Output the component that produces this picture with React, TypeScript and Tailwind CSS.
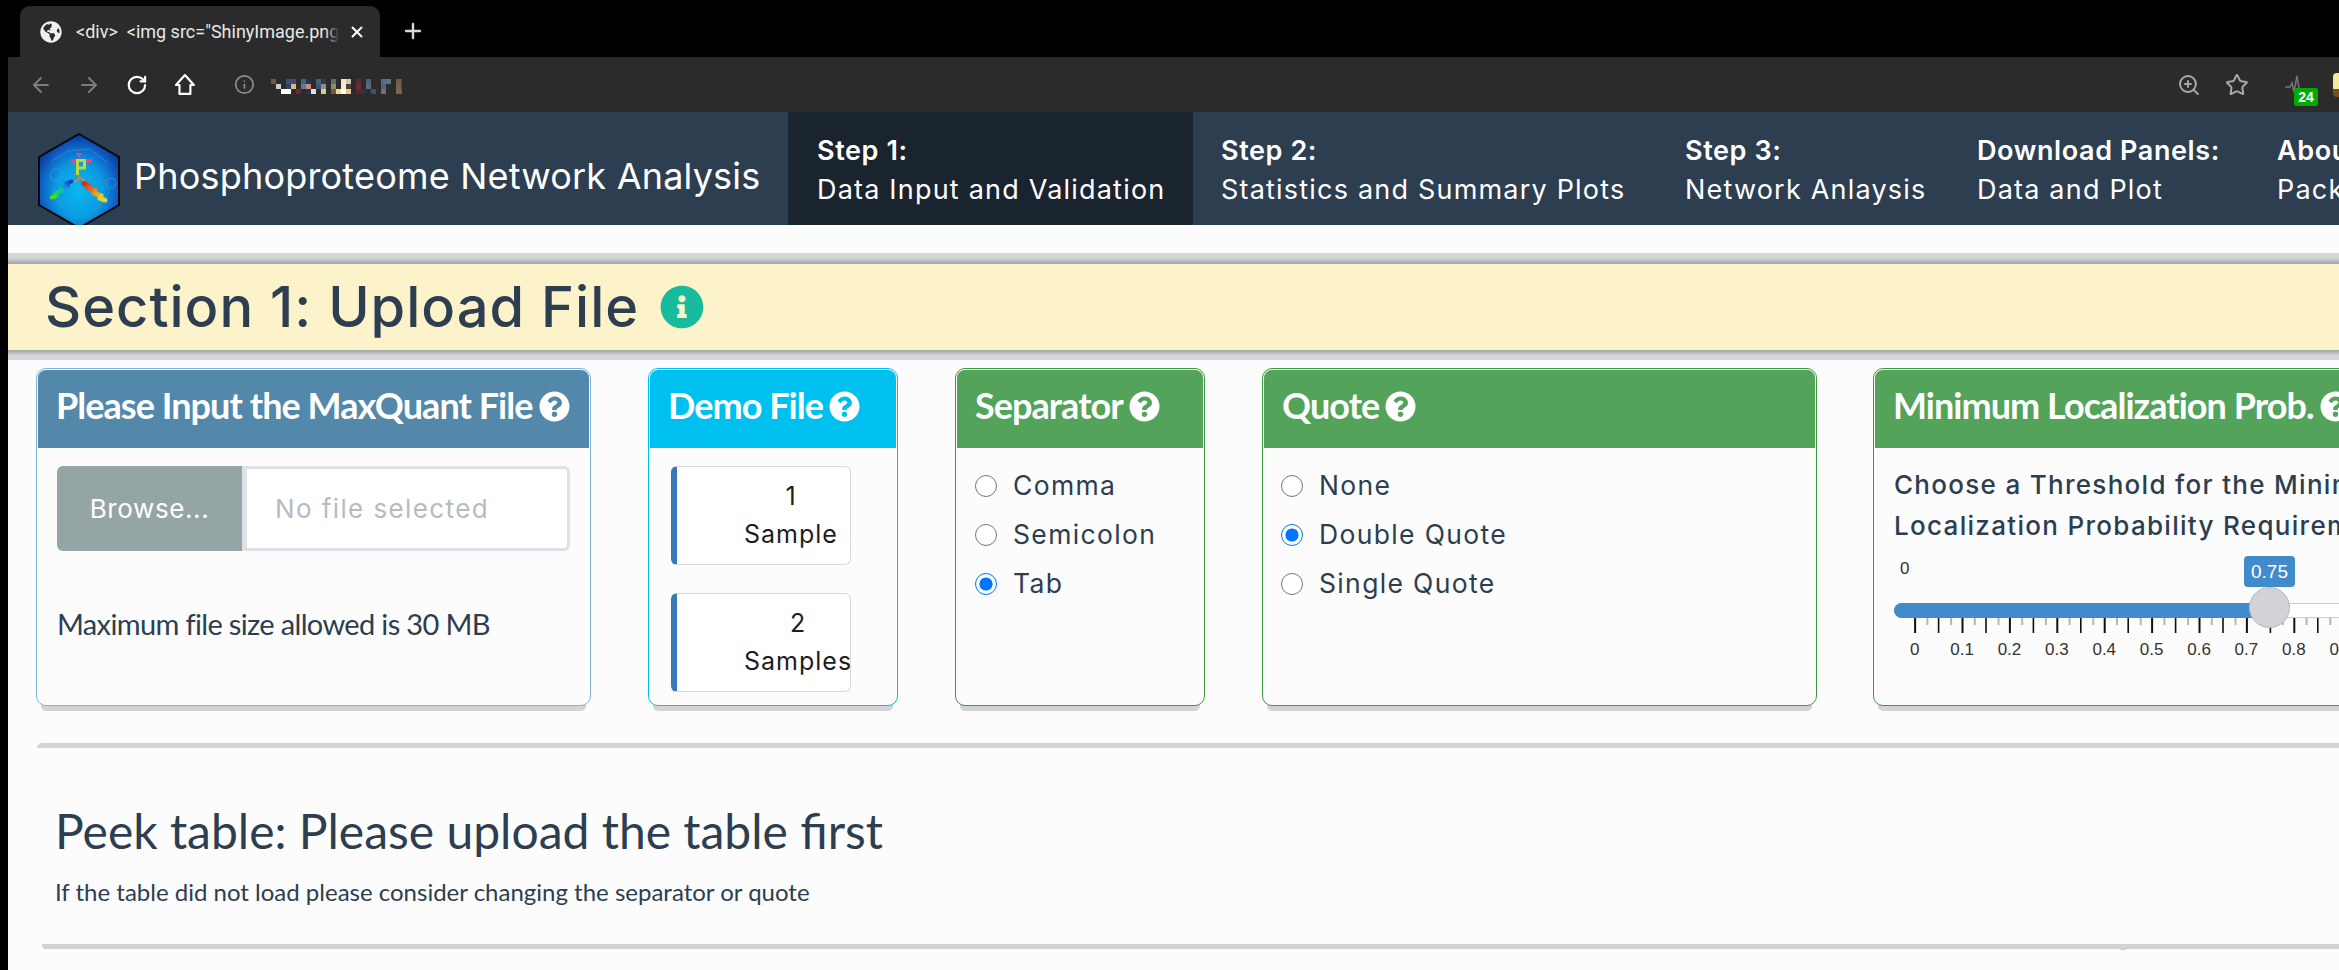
import React from "react";
import { ArrowLeft, ArrowRight, RotateCw, Info, ZoomIn, Star, Plus, X } from "lucide-react";
import { FaGlobeAmericas, FaInfoCircle, FaQuestionCircle } from "react-icons/fa";

const work = "font-['Inter','Noto_Sans',sans-serif]";
const lato = "font-['Lato','Noto_Sans',sans-serif]";

const mosaic: [number, number, string][] = [
  [0,0,"#6b5b4a"],[3,0,"#39506e"],[4,0,"#39506e"],[6,0,"#4a5f78"],[7,0,"#22344e"],[9,0,"#4a5f78"],[10,0,"#2a3c58"],[12,0,"#6a6a6a"],[14,0,"#f2e8c4"],[15,0,"#cfc7a8"],[17,0,"#5a2a30"],[19,0,"#50607a"],[22,0,"#5a6a80"],[23,0,"#60728a"],[25,0,"#6e5a48"],[26,0,"#5a4a40"],
  [1,1,"#cccccc"],[3,1,"#30415e"],[4,1,"#d8b88c"],[6,1,"#5d7c98"],[7,1,"#d08a80"],[9,1,"#3e5572"],[10,1,"#8e8e8e"],[12,1,"#8a8a70"],[14,1,"#f4ecc8"],[15,1,"#4a4040"],[17,1,"#6a2c34"],[19,1,"#5a6a80"],[22,1,"#52647c"],[25,1,"#7a6450"],[26,1,"#4e4030"],
  [2,2,"#ffffff"],[3,2,"#ffffff"],[5,2,"#6a2a30"],[7,2,"#22344e"],[8,2,"#e8e0d0"],[10,2,"#d8c8a0"],[12,2,"#7a5a30"],[13,2,"#f2d890"],[14,2,"#ffffff"],[15,2,"#e8c880"],[17,2,"#5a2630"],[18,2,"#22344e"],[20,2,"#40506a"],[22,2,"#707070"],[25,2,"#7a6450"],[26,2,"#7a6450"],
];

const leftHelix = ["#1240c8", "#1260d8", "#1490d8", "#14b8c0", "#14c890", "#20d050", "#50d820"];
const rightHelix = ["#d83020", "#e04820", "#e86820", "#e88820", "#e8a820", "#e8c828", "#d8d830"];

function Logo() {
  return (
    <svg width="82" height="95" viewBox="0 0 82 95" className="shrink-0 block">
      <defs>
        <radialGradient id="hex" cx="50%" cy="60%" r="58%">
          <stop offset="0%" stopColor="#0bb8ec" />
          <stop offset="50%" stopColor="#0a9ce2" />
          <stop offset="78%" stopColor="#0f66c8" />
          <stop offset="100%" stopColor="#0b3ca4" />
        </radialGradient>
      </defs>
      <polygon points="41,1 81,24 81,72 41,95 1,72 1,24" fill="url(#hex)" stroke="#05080f" strokeWidth="2" />
      <path d="M14 28 L30 18 L52 16 L70 30 M12 62 L26 74 M70 64 L54 80" stroke="#3f9fe0" strokeWidth="1" fill="none" opacity=".55" />
      <circle cx="18" cy="42" r="6" fill="none" stroke="#45a8e4" opacity=".55" />
      <circle cx="73" cy="50" r="5" fill="none" stroke="#45a8e4" opacity=".55" />
      <path d="M33 28h6M45 28h9" stroke="#e8487a" strokeWidth="3.5" />
      <path d="M38 20l3 5 3-5z" fill="#e8487a" />
      <path d="M39.5 42V27.5h7v7.5h-7" fill="none" stroke="#b8dc3c" strokeWidth="3" />
      <path d="M41 42l-1 5-7 3M42 44l4 3v3" fill="none" stroke="#c98a48" strokeWidth="1.6" />
      {leftHelix.map((c, i) => (
        <ellipse key={c} cx={32 - i * 2.8} cy={49 + i * 2.5} rx="3.6" ry="2.2" fill={c} transform={`rotate(${i % 2 ? 60 : -20} ${32 - i * 2.8} ${49 + i * 2.5})`} />
      ))}
      {rightHelix.map((c, i) => (
        <ellipse key={c} cx={47 + i * 3.1} cy={51 + i * 2.6} rx="4" ry="2.6" fill={c} transform={`rotate(${i % 2 ? -60 : 20} ${47 + i * 3.1} ${51 + i * 2.6})`} />
      ))}
    </svg>
  );
}

function NavItem({ a, b, w, active, pl }: { a: string; b: string; w: string; active?: boolean; pl: string }) {
  return (
    <div className={`${w} ${pl} ${active ? "bg-[#1a242f]" : ""} h-[113px] pt-[5px] shrink-0 flex flex-col justify-center text-white whitespace-nowrap ${work}`}>
      <div className="text-[27px] leading-[38px] font-semibold tracking-[0.6px]">{a}</div>
      <div className="text-[27px] leading-[40px] tracking-[1.2px]">{b}</div>
    </div>
  );
}

function Card({ title, w, border, head, children }: { title: string; w: string; border: string; head: string; children: React.ReactNode }) {
  return (
    <div className={`${w} ${border} h-[338px] shrink-0 border rounded-[10px] bg-[#fcfcfc] shadow-[0_10px_0_-5px_#d1d3d6]`}>
      <div className={`${head} mx-px mt-px h-[78px] rounded-t-[8px] pl-[18px] pt-[12px] flex items-start gap-[6px] text-white whitespace-nowrap overflow-hidden ${lato}`}>
        <span className="text-[36px] leading-[46px] font-bold tracking-[-0.95px]">{title}</span>
        <FaQuestionCircle className="shrink-0 mt-[9px] text-[31px]" />
      </div>
      {children}
    </div>
  );
}

function Radio({ name, label, checked }: { name: string; label: string; checked?: boolean }) {
  return (
    <label className="h-[49px] flex items-center gap-[16px]">
      <input type="radio" name={name} defaultChecked={checked} className="w-[22px] h-[22px] m-0 accent-[#0075ff]" />
      <span className={`text-[26.5px] text-[#2c3e50] tracking-[1.35px] whitespace-nowrap ${work}`}>{label}</span>
    </label>
  );
}

function DemoButton({ n, label }: { n: string; label: string }) {
  return (
    <div className="w-[180px] h-[99px] bg-white border border-[#d5d9dd] border-l-[6px] border-l-[#3a77b9] rounded-[6px] overflow-hidden flex items-center">
      <div className={`ml-[67px] mt-[-1px] w-max text-center text-[25px] leading-[38px] tracking-[1px] text-[#1d1d1d] whitespace-nowrap ${work}`}>
        <div>{n}</div>
        <div>{label}</div>
      </div>
    </div>
  );
}

function Ticks() {
  const els: React.ReactNode[] = [];
  for (let i = 0; i < 21; i++) {
    const x = 20 + i * 23.7;
    els.push(<rect key={`a${i}`} x={x - 0.9} y={0} width={i % 2 === 0 ? 2 : 1.6} height={15} fill="#111" />);
    els.push(<rect key={`b${i}`} x={x + 11.4} y={0} width={2} height={7} fill="#b5b5b5" />);
  }
  return <svg width="515" height="15" className="absolute left-0 top-[72px]">{els}</svg>;
}

function Slider() {
  const labels = ["0", "0.1", "0.2", "0.3", "0.4", "0.5", "0.6", "0.7", "0.8", "0.9", "1"];
  return (
    <div className="relative ml-px h-[120px] w-[515px] font-['Liberation_Sans',sans-serif]">
      <div className="absolute left-[5px] top-[13px] text-[17px] leading-[20px] text-[#333]">0</div>
      <div className="absolute left-[349px] top-[10px] w-[51px] h-[31px] rounded-[4px] bg-[#428bca] text-white text-[19px] leading-[31px] text-center">0.75</div>
      <div className="absolute left-[-1px] top-[57px] w-[516px] h-[15px] rounded-[8px] bg-white border border-[#cccccc]" />
      <div className="absolute left-[-1px] top-[57px] w-[376px] h-[15px] rounded-l-[8px] bg-[#428bca]" />
      <Ticks />
      <div className="absolute left-[354px] top-[41px] w-[41px] h-[41px] rounded-full bg-[#d1d3d6] border border-[#b5b8bc]" />
      <div className="absolute left-[-4px] top-[94px] flex text-[17px] leading-[20px] text-[#333]">
        {labels.map((l) => (
          <div key={l} className="w-[47.4px] text-center shrink-0">{l}</div>
        ))}
      </div>
    </div>
  );
}

export default function App() {
  return (
    <div className="w-[2339px] h-[970px] overflow-hidden flex bg-black">
      <div className="w-[8px] shrink-0 bg-black" />
      <div className="w-[2331px] shrink-0 flex flex-col bg-[#fcfcfc]">
        {/* tab strip */}
        <div className="h-[57px] shrink-0 bg-black flex items-end">
          <div className="ml-[12px] w-[360px] h-[51px] rounded-t-[10px] bg-[#2b2b2b] flex items-center pl-[20px] text-[#e8e8e8]">
            <FaGlobeAmericas className="text-[22px] text-[#f0f0f0] shrink-0" />
            <div className="relative ml-[14px] w-[263px] overflow-hidden">
              <span className="block whitespace-pre text-[18px] font-['Roboto',sans-serif]">&lt;div&gt;  &lt;img src="ShinyImage.png"</span>
              <div className="absolute right-0 top-0 bottom-0 w-[14px] bg-gradient-to-r from-transparent to-[#2b2b2b]" />
            </div>
            <X size={18} strokeWidth={2.6} className="ml-[9px] shrink-0 text-white" />
          </div>
          <Plus size={24} strokeWidth={2.4} className="ml-[21px] mb-[14px] text-[#d8d8d8]" />
        </div>
        {/* toolbar */}
        <div className="h-[55px] shrink-0 bg-[#2b2b2b] flex items-center">
          <ArrowLeft size={24} className="ml-[21px] text-[#7c7c7c]" />
          <ArrowRight size={24} className="ml-[24px] text-[#7c7c7c]" />
          <RotateCw size={22} strokeWidth={2.4} className="ml-[25px] text-white" />
          <svg width="22" height="24" viewBox="0 0 22 24" className="ml-[26px]" fill="none" stroke="#fff" strokeWidth="2.2" strokeLinejoin="round"><path d="M11 2L2 12h3.5v9h11v-9H20z" /></svg>
          <Info size={21} className="ml-[39px] text-[#8c8c8c]" />
          <svg width="132" height="16" className="ml-[16px] mt-[4px]" shapeRendering="crispEdges">
            {mosaic.map(([x, y, c], i) => <rect key={i} x={x * 5} y={y * 5} width="5" height="5" fill={c} />)}
          </svg>
          <ZoomIn size={24} className="ml-[1775px] text-[#a8a8a8]" />
          <Star size={24} className="ml-[24px] text-[#a8a8a8]" />
          <div className="relative ml-[30px] w-[30px] h-[30px] shrink-0">
            <svg width="18" height="18" viewBox="0 0 18 18" className="absolute left-[6px] top-[5px]" fill="none" stroke="#777" strokeWidth="1.5"><path d="M0 12h5l2-4 2 9 3-16 2 12" /></svg>
            <div className="absolute left-[15px] top-[18px] w-[24px] h-[18px] rounded-[2px] bg-[#00aa00] text-white text-[14px] leading-[18px] font-bold text-center font-['Liberation_Sans',sans-serif]">24</div>
          </div>
          <div className="ml-[24px] w-[6px] h-[24px] rounded-l-[4px] bg-gradient-to-b from-[#f2eb9a] from-65% to-[#7a4e1c] to-65% shrink-0" />
        </div>
        {/* navbar */}
        <div className="h-[113px] shrink-0 bg-[#2c3e50] flex items-stretch overflow-hidden">
          <div className="w-[780px] shrink-0 flex items-start pl-[30px] pt-[21px]">
            <Logo />
            <span className={`ml-[14px] mt-[21px] text-[36px] leading-[44px] text-white whitespace-nowrap tracking-[0.2px] ${work}`}>Phosphoproteome Network Analysis</span>
          </div>
          <NavItem active w="w-[405px]" pl="pl-[29px]" a="Step 1:" b="Data Input and Validation" />
          <NavItem w="w-[464px]" pl="pl-[28px]" a="Step 2:" b="Statistics and Summary Plots" />
          <NavItem w="w-[292px]" pl="pl-[28px]" a="Step 3:" b="Network Anlaysis" />
          <NavItem w="w-[300px]" pl="pl-[28px]" a="Download Panels:" b="Data and Plot" />
          <NavItem w="w-[300px]" pl="pl-[28px]" a="About:" b="Package" />
        </div>
        {/* section banner */}
        <div className="mt-[28px] h-[107px] shrink-0 flex flex-col">
          <div className="h-[11px] bg-gradient-to-b from-[#d3d5d8] from-45% to-[#9ea4ab]" />
          <div className="h-[86px] bg-[#fdf3cb] flex items-center pl-[37px]">
            <span className={`text-[56px] leading-[64px] font-medium text-[#2c3e50] whitespace-nowrap tracking-[1px] ${work}`}>Section 1: Upload File</span>
            <FaInfoCircle className="ml-[21px] text-[44px] text-[#18bc9c] shrink-0" />
          </div>
          <div className="h-[10px] bg-gradient-to-b from-[#9ea4ab] to-[#d3d5d8] to-55%" />
        </div>
        {/* cards */}
        <div className="mt-[8px] flex pl-[28px] shrink-0">
          <Card w="w-[555px]" border="border-[#7fb4d8]" head="bg-[#5388aa]" title="Please Input the MaxQuant File">
            <div className="pl-[20px] pt-[18px]">
              <div className={`flex w-[513px] h-[85px] ${work}`}>
                <div className="w-[185px] rounded-l-[6px] bg-[#95a5a6] text-white text-[26px] tracking-[0.6px] flex items-center justify-center">Browse...</div>
                <div className="flex-1 rounded-r-[6px] bg-white border-[3px] border-l-[5px] border-[#dee2e6] text-[#b4bcc2] text-[26px] tracking-[1.4px] flex items-center pl-[28px] whitespace-nowrap">No file selected</div>
              </div>
              <div className={`mt-[53px] text-[29px] leading-[40px] tracking-[-0.65px] text-[#2c3e50] whitespace-nowrap ${lato}`}>Maximum file size allowed is 30 MB</div>
            </div>
          </Card>
          <div className="w-[57px] shrink-0" />
          <Card w="w-[250px]" border="border-[#00c0ef]" head="bg-[#00c0ef]" title="Demo File">
            <div className="pl-[22px] pt-[18px] flex flex-col gap-[28px]">
              <DemoButton n="1" label="Sample" />
              <DemoButton n="2" label="Samples" />
            </div>
          </Card>
          <div className="w-[57px] shrink-0" />
          <Card w="w-[250px]" border="border-[#3d9a3d]" head="bg-[#53a35a]" title="Separator">
            <div className="pl-[19px] pt-[13px]">
              <Radio name="sep" label="Comma" />
              <Radio name="sep" label="Semicolon" />
              <Radio name="sep" label="Tab" checked />
            </div>
          </Card>
          <div className="w-[57px] shrink-0" />
          <Card w="w-[555px]" border="border-[#3d9a3d]" head="bg-[#53a35a]" title="Quote">
            <div className="pl-[18px] pt-[13px]">
              <Radio name="quote" label="None" />
              <Radio name="quote" label="Double Quote" checked />
              <Radio name="quote" label="Single Quote" />
            </div>
          </Card>
          <div className="w-[56px] shrink-0" />
          <Card w="w-[555px]" border="border-[#3d9a3d]" head="bg-[#53a35a]" title="Minimum Localization Prob.">
            <div className="pl-[20px] pt-[16px]">
              <div className={`w-[520px] text-[26px] leading-[41px] font-medium text-[#2c3e50] tracking-[1.3px] ${work}`}>
                <div className="whitespace-nowrap">Choose a Threshold for the Minimum</div>
                <div className="whitespace-nowrap">Localization Probability Requirement</div>
              </div>
              <Slider />
            </div>
          </Card>
        </div>
        {/* peek */}
        <div className="relative mt-[37px] ml-[29px] w-[2400px] h-[206px] shrink-0 flex flex-col">
          <div className="h-[5px] rounded-tl-[6px] bg-[#d1d3d6]" />
          <div className="flex-1 pl-[18px] pt-[53px]">
            <div className={`text-[48px] leading-[60px] text-[#2c3e50] whitespace-nowrap ${lato}`}>Peek table: Please upload the table first</div>
            <div className={`mt-[15px] text-[24px] leading-[32px] text-[#2c3e50] whitespace-nowrap ${lato}`}>If the table did not load please consider changing the separator or quote</div>
          </div>
          <div className="ml-[5px] h-[5px] rounded-bl-[4px] bg-[#d1d3d6]" />
          <div className="absolute left-[2083px] bottom-[-1px] w-[6px] h-[1px] bg-[#d1d3d6]" />
        </div>
      </div>
    </div>
  );
}
